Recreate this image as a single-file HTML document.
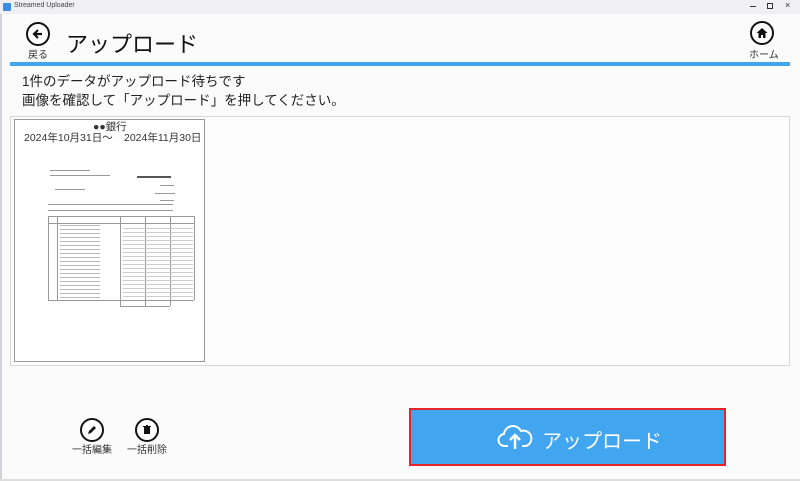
<!DOCTYPE html>
<html><head><meta charset="utf-8"><style>
*{margin:0;padding:0;box-sizing:border-box}
body{width:800px;height:481px;background:#fbfbfb;font-family:"Liberation Sans","Noto Sans CJK JP",sans-serif;position:relative;overflow:hidden;color:#222}
.abs{position:absolute}
.circ{position:absolute;border:2.5px solid #111;border-radius:50%;background:#fff}
.lbl{position:absolute;font-size:10px;color:#333;text-align:center}
.doc div{position:absolute;background:#999}
.doc span{position:absolute;font-size:10.5px;color:#333;white-space:nowrap}
</style></head><body>
<div class="abs" style="left:0;top:0;width:800px;height:14px;background:#f0eff4"></div>
<div class="abs" style="left:3px;top:3px;width:8px;height:8px;background:#3a8ee6;border-radius:1px"></div>
<div class="abs" style="left:14px;top:2px;font-size:7px;color:#444;white-space:nowrap">Streamed Uploader</div>
<div class="abs" style="left:750px;top:6px;width:6px;height:1px;background:#333"></div>
<div class="abs" style="left:767px;top:3px;width:6px;height:6px;border:1px solid #333"></div>
<div class="abs" style="left:785px;top:0px;font-size:9px;color:#333">×</div>
<div class="abs" style="left:0;top:14px;width:2px;height:467px;background:#cfd2d6"></div>

<div class="circ" style="left:26px;top:22px;width:24px;height:24px"></div>
<svg class="abs" style="left:30px;top:26px" width="16" height="16" viewBox="0 0 16 16"><path d="M12 8H4M8 4L4 8L8 12" stroke="#111" stroke-width="2.2" fill="none"/></svg>
<div class="lbl" style="left:28px;top:46px">戻る</div>
<div class="abs" style="left:66px;top:27px;font-size:22px;color:#111">アップロード</div>

<div class="circ" style="left:750px;top:21px;width:24px;height:24px"></div>
<svg class="abs" style="left:755px;top:26px" width="14" height="14" viewBox="0 0 14 14"><path d="M7 2L1.5 7H3.5V12H6V9H8V12H10.5V7H12.5Z" fill="#111"/></svg>
<div class="lbl" style="left:749px;top:46px">ホーム</div>

<div class="abs" style="left:10px;top:62px;width:780px;height:4px;background:#42a5f0"></div>
<div class="abs" style="left:22px;top:72px;font-size:13.5px;line-height:19px;color:#222">1件のデータがアップロード待ちです<br>画像を確認して「アップロード」を押してください。</div>

<div class="abs" style="left:10px;top:116px;width:780px;height:250px;border:1px solid #d8d8d8;background:#fcfcfc"></div>
<div class="abs doc" style="left:14px;top:119px;width:191px;height:243px;border:1px solid #999;background:#fff">
<span style="left:78px;top:-1px">●●銀行</span>
<span style="left:9px;top:10px">2024年10月31日～</span>
<span style="left:109px;top:10px">2024年11月30日</span>
<div style="left:122px;top:56px;width:34px;height:2px;background:#555"></div>
<div style="left:35px;top:50px;width:40px;height:1px"></div>
<div style="left:35px;top:55px;width:60px;height:1px"></div>
<div style="left:40px;top:69px;width:30px;height:1px"></div>
<div style="left:145px;top:65px;width:14px;height:1px"></div>
<div style="left:140px;top:73px;width:20px;height:1px"></div>
<div style="left:145px;top:80px;width:14px;height:1px"></div>
<div style="left:33px;top:84px;width:125px;height:1px"></div>
<div style="left:33px;top:90px;width:125px;height:1px"></div>
<div style="left:33px;top:96px;width:146px;height:1px"></div>
<div style="left:33px;top:96px;width:1px;height:84px"></div>
<div style="left:42px;top:96px;width:1px;height:84px"></div>
<div style="left:105px;top:96px;width:1px;height:90px"></div>
<div style="left:130px;top:96px;width:1px;height:90px"></div>
<div style="left:155px;top:96px;width:1px;height:90px"></div>
<div style="left:179px;top:96px;width:1px;height:84px"></div>
<div style="left:33px;top:103px;width:146px;height:1px"></div>
<div style="left:33px;top:180px;width:146px;height:1px"></div>
<div style="left:105px;top:186px;width:50px;height:1px"></div>
<div style="left:45px;top:105px;width:40px;height:74px;background:repeating-linear-gradient(#bbb 0 1px,transparent 1px 4px)"></div>
<div style="left:108px;top:105px;width:70px;height:74px;background:repeating-linear-gradient(transparent 0 3px,#ccc 3px 4px)"></div>
</div>

<div class="circ" style="left:80px;top:418px;width:24px;height:24px"></div>
<svg class="abs" style="left:85px;top:423px" width="14" height="14" viewBox="0 0 14 14"><path d="M3 11L4 8L9 3L11 5L6 10Z" fill="#111"/></svg>
<div class="lbl" style="left:72px;top:441px">一括編集</div>
<div class="circ" style="left:135px;top:418px;width:24px;height:24px"></div>
<svg class="abs" style="left:140px;top:423px" width="14" height="14" viewBox="0 0 14 14"><path d="M4 4H10V11H4Z M3 3H11V4H3Z M6 2H8V3H6Z" fill="#111"/></svg>
<div class="lbl" style="left:127px;top:441px">一括削除</div>

<div class="abs" style="left:409px;top:408px;width:317px;height:58px;border:2px solid #e8242b;background:#42a5f0"></div>
<svg class="abs" style="left:497px;top:422px" width="36" height="30" viewBox="0 0 36 30"><path d="M11 24H8a6 6 0 0 1-1-12 9 9 0 0 1 17-3 7 7 0 0 1 5 15h-4" stroke="#fff" stroke-width="2" fill="none"/><path d="M18 27V14M13 18L18 13L23 18" stroke="#fff" stroke-width="2.5" fill="none"/></svg>
<div class="abs" style="left:542px;top:425px;font-size:20px;color:#fff">アップロード</div>
<div class="abs" style="left:0;top:479px;width:800px;height:2px;background:#ddd"></div>
</body></html>
